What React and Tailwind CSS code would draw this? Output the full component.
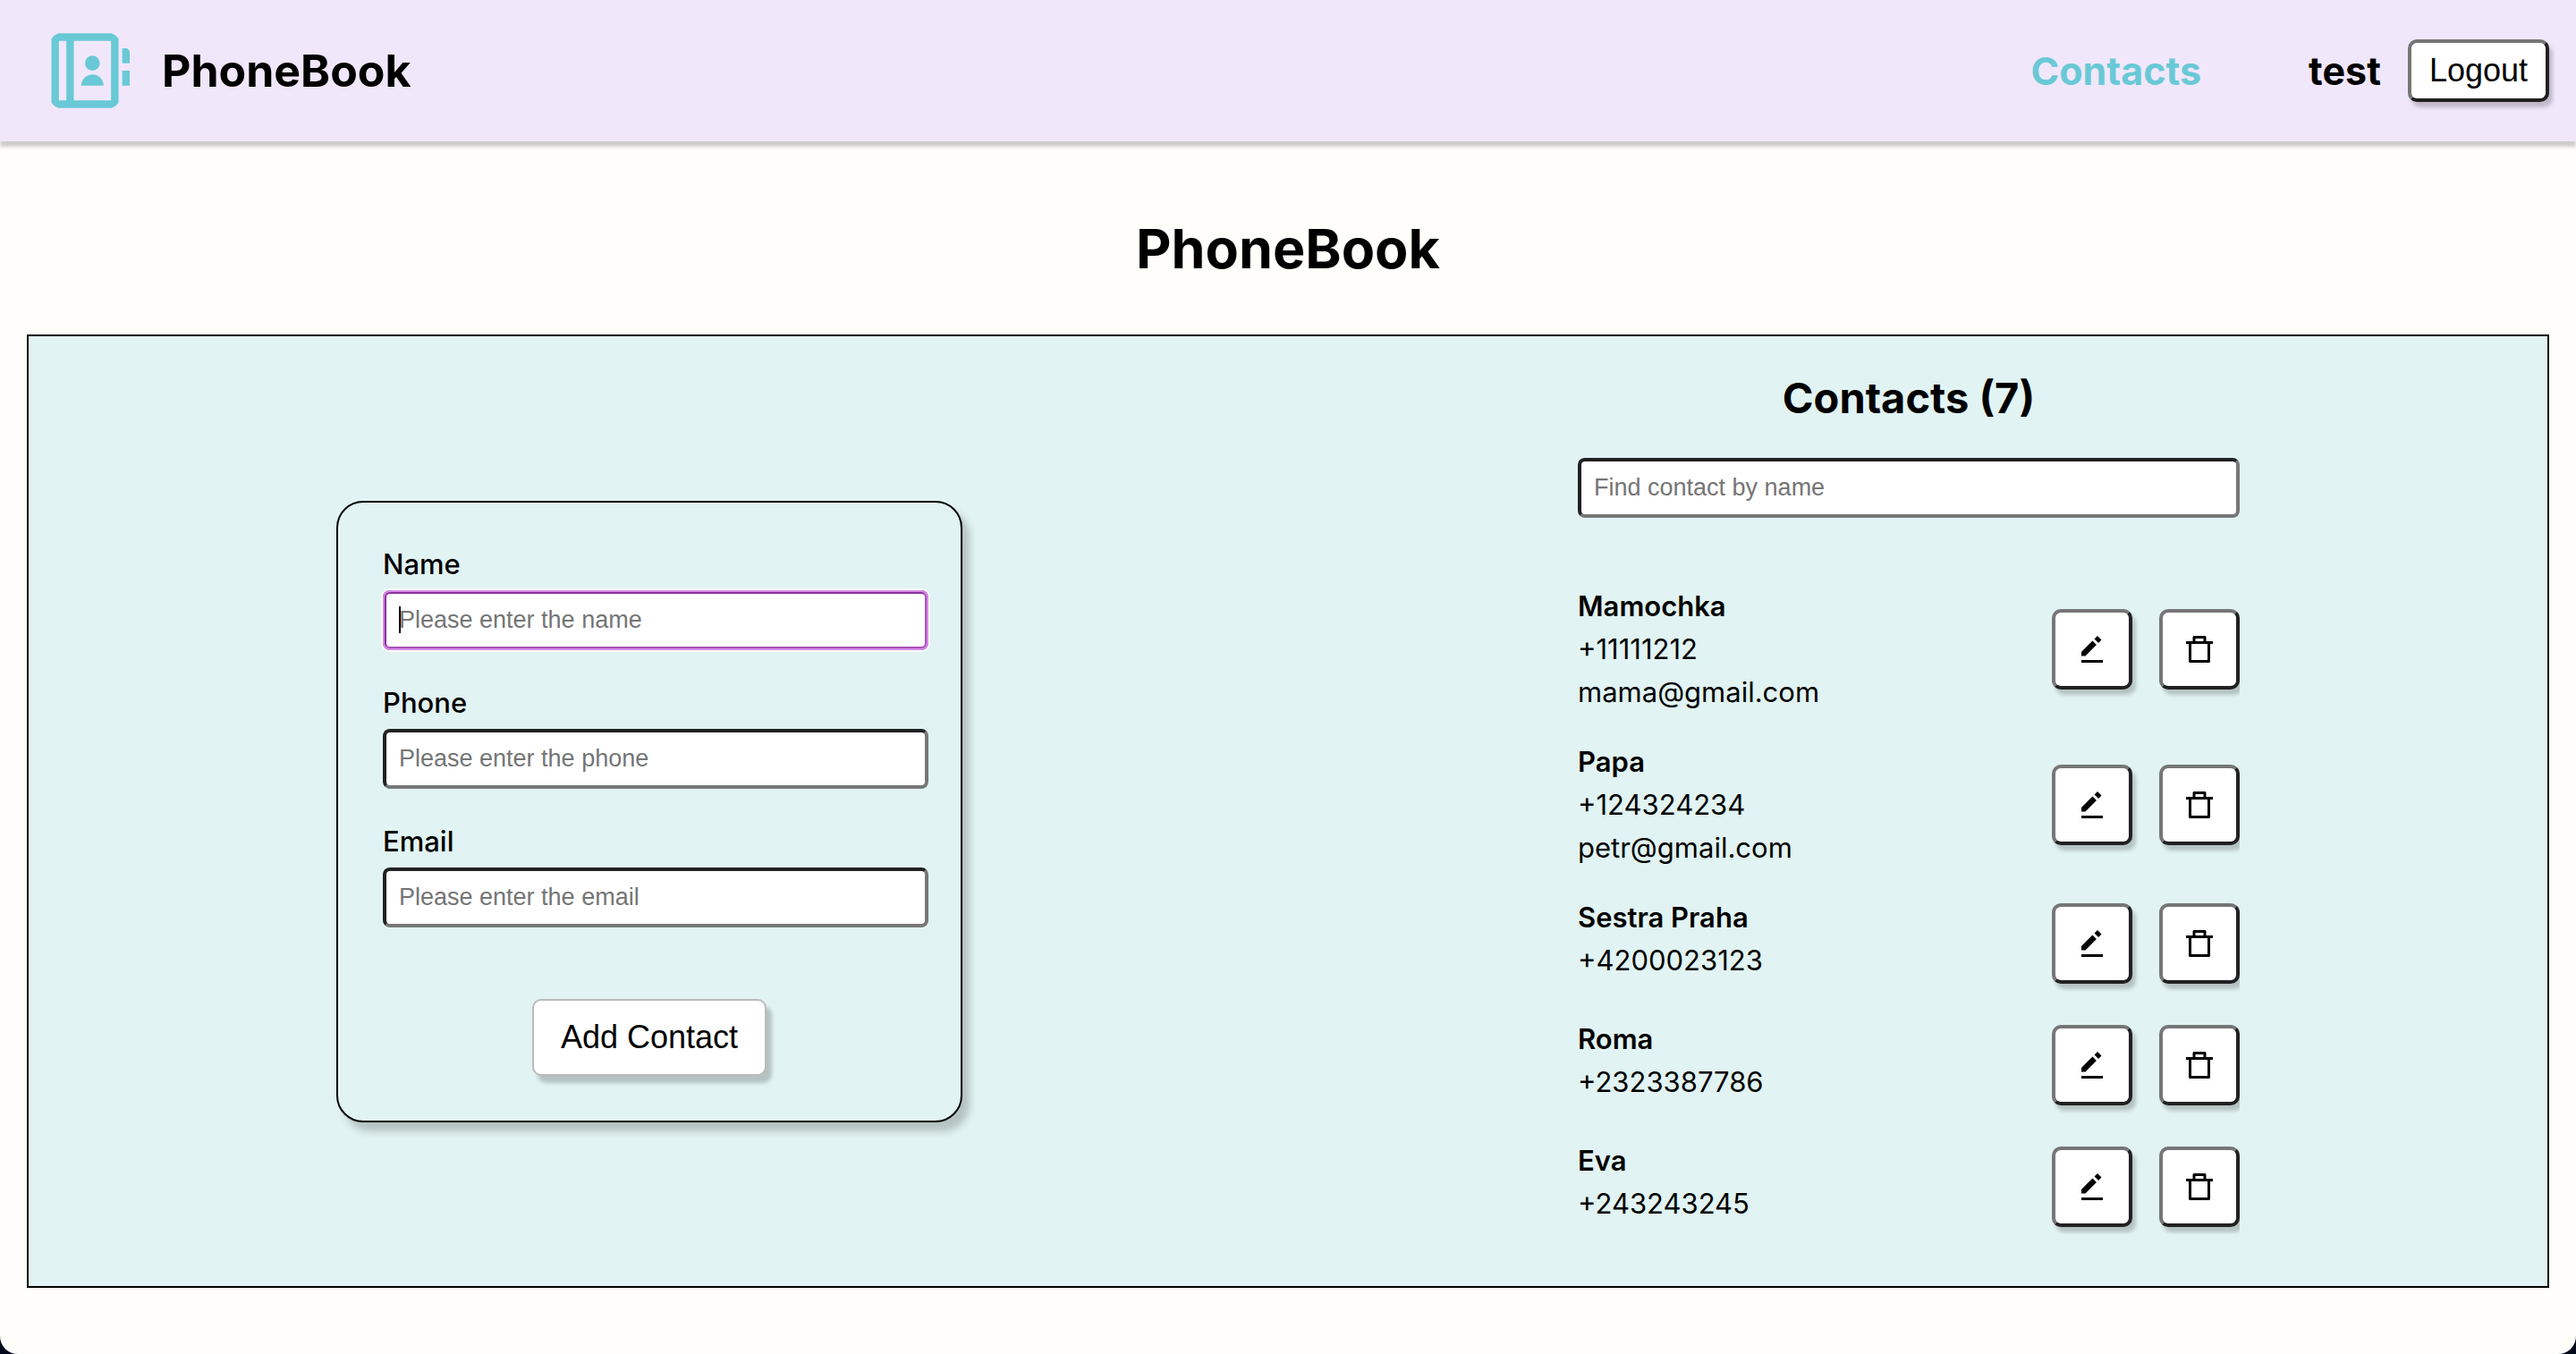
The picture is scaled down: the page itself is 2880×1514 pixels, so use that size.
import React from "react";

const contacts = [
  { name: "Mamochka", phone: "+11111212", email: "mama@gmail.com" },
  { name: "Papa", phone: "+124324234", email: "petr@gmail.com" },
  { name: "Sestra Praha", phone: "+4200023123" },
  { name: "Roma", phone: "+2323387786" },
  { name: "Eva", phone: "+243243245" },
];

const fieldBase =
  "block h-[67px] w-full rounded-[8px] bg-white font-['Liberation_Sans',Arial,sans-serif] text-[27px] leading-[32px] text-black placeholder:text-[#757575]";

const fieldIdle =
  "border-4 border-t-[#212121] border-r-[#767676] border-b-[#767676] border-l-[#212121] px-[14px] outline-none";

const fieldActive =
  "border-4 border-t-[#8a2fa0] border-r-[#a850b8] border-b-[#a850b8] border-l-[#8a2fa0] px-[14px] ring-2 ring-white outline-2 -outline-offset-2 outline-[#d58ae8]";

const outsetClass =
  "rounded-[10px] border-4 border-t-[#767676] border-r-[#212121] border-b-[#212121] border-l-[#767676] bg-white shadow-[4px_6px_4px_rgba(0,0,0,0.2)]";

function BookIcon() {
  return (
    <svg viewBox="0 0 24 24" className="size-[100px] text-[#69c9d6]" fill="currentColor" aria-hidden="true">
      <path
        fillRule="evenodd"
        d="M4.9 2H19.1C19.9 2.3 20.7 2.8 21 3.5V20.5C20.7 21.2 19.9 21.7 19.1 22H4.9C4.1 21.7 3.3 21.2 3 20.5V3.5C3.3 2.8 4.1 2.3 4.9 2ZM5 4V20H7V4H5ZM9 4V20H19V4H9Z"
      />
      <circle cx="14" cy="10" r="2" />
      <path d="M11 16C11 14.34 12.34 13 14 13S17 14.34 17 16H11Z" />
      <path d="M22 6H23.2C23.7 6.2 23.9 6.6 24 7V10H22V6ZM22 12H24V16H22V12Z" />
    </svg>
  );
}

function PencilIcon() {
  return (
    <svg viewBox="0 0 24 24" className="size-9" fill="currentColor" aria-hidden="true">
      <path d="m16 2.012 3 3L16.713 7.3l-3-3zM4 14v3h3l8.299-8.287-3-3zm0 6h16v2H4z" />
    </svg>
  );
}

function TrashIcon() {
  return (
    <svg viewBox="0 0 24 24" className="size-9" fill="currentColor" aria-hidden="true">
      <path
        fillRule="evenodd"
        d="M7 6V3C7 2.45 7.45 2 8 2H16C16.55 2 17 2.45 17 3V6H22V8H20V21C20 21.55 19.55 22 19 22H5C4.45 22 4 21.55 4 21V8H2V6H7ZM6 8V20H18V8H6ZM9 4V6H15V4H9Z"
      />
    </svg>
  );
}

function Header() {
  return (
    <header className="flex h-[158px] items-center justify-between bg-[#f1e7fb] pr-[30px] pl-[45px] shadow-[0_6px_4px_rgba(0,0,0,0.2)]">
      <a href="#home" className="flex items-center gap-[36px] text-[50px] font-bold">
        <BookIcon />
        PhoneBook
      </a>
      <nav className="flex items-center text-[43px] font-bold">
        <a href="#contacts" className="mr-[120px] text-[#69c9d6]">
          Contacts
        </a>
        <span className="mr-[30px]">test</span>
        <button
          type="button"
          className={`${outsetClass} h-[70px] px-[20px] font-['Liberation_Sans',Arial,sans-serif] text-[36px] font-normal`}
        >
          Logout
        </button>
      </nav>
    </header>
  );
}

function Field({ id, label, active }) {
  return (
    <div>
      <label htmlFor={id} className="block pb-[5px] text-[31px] leading-[48px] font-medium">
        {label}
      </label>
      <div className="relative">
        <input
          id={id}
          type="text"
          placeholder={`Please enter the ${id}`}
          className={`${fieldBase} ${active ? fieldActive : fieldIdle}`}
        />
        {active && <span className="absolute top-[18px] left-[18px] h-[30px] w-[2px] bg-black" />}
      </div>
    </div>
  );
}

function ContactForm() {
  return (
    <form className="flex w-[700px] flex-col items-center self-center rounded-[30px] border-2 border-black pt-[45px] pr-[36px] pb-[50px] pl-[50px] shadow-[8px_10px_8px_rgba(0,0,0,0.2)]">
      <div className="flex w-full flex-col gap-[35px]">
        <Field id="name" label="Name" active />
        <Field id="phone" label="Phone" />
        <Field id="email" label="Email" />
      </div>
      <button
        type="button"
        className="mt-[80px] mr-[14px] h-[86px] rounded-[10px] border-2 border-[#bbb] bg-white px-[30px] font-['Liberation_Sans',Arial,sans-serif] text-[36px] shadow-[6px_8px_4px_rgba(0,0,0,0.2)]"
      >
        Add Contact
      </button>
    </form>
  );
}

function ContactRow({ contact }) {
  return (
    <li className="flex justify-between text-[31px] leading-[48px]">
      <div>
        <p className="font-semibold">{contact.name}</p>
        <p>{contact.phone}</p>
        {contact.email && <p>{contact.email}</p>}
      </div>
      <div className="flex items-center gap-[30px] py-[8px]">
        <button type="button" aria-label={`Edit ${contact.name}`} className={`${outsetClass} grid size-[90px] place-items-center`}>
          <PencilIcon />
        </button>
        <button type="button" aria-label={`Delete ${contact.name}`} className={`${outsetClass} grid size-[90px] place-items-center`}>
          <TrashIcon />
        </button>
      </div>
    </li>
  );
}

function ContactList() {
  return (
    <section className="w-[740px] pb-[24px]">
      <h2 className="text-center text-[47px] leading-[70px] font-bold">Contacts (7)</h2>
      <input
        type="text"
        aria-label="Find contact by name"
        placeholder="Find contact by name"
        className={`${fieldBase} ${fieldIdle} mt-[32px]`}
      />
      <ul className="mt-[75px] flex flex-col gap-[30px] overflow-hidden">
        {contacts.map((contact) => (
          <ContactRow key={contact.name} contact={contact} />
        ))}
      </ul>
    </section>
  );
}

export default function App() {
  return (
    <div className="min-h-screen bg-[#020a1c] font-['Inter',sans-serif] text-black">
      <div className="min-h-screen rounded-b-[20px] bg-[#fffefa]">
        <Header />
        <main className="px-[30px]">
          <h1 className="pt-[72px] pb-[48px] text-center text-[61px] leading-[96px] font-bold">PhoneBook</h1>
          <div className="flex justify-around border-2 border-black bg-[#e1f3f2] py-[34px]">
            <ContactForm />
            <ContactList />
          </div>
        </main>
      </div>
    </div>
  );
}
